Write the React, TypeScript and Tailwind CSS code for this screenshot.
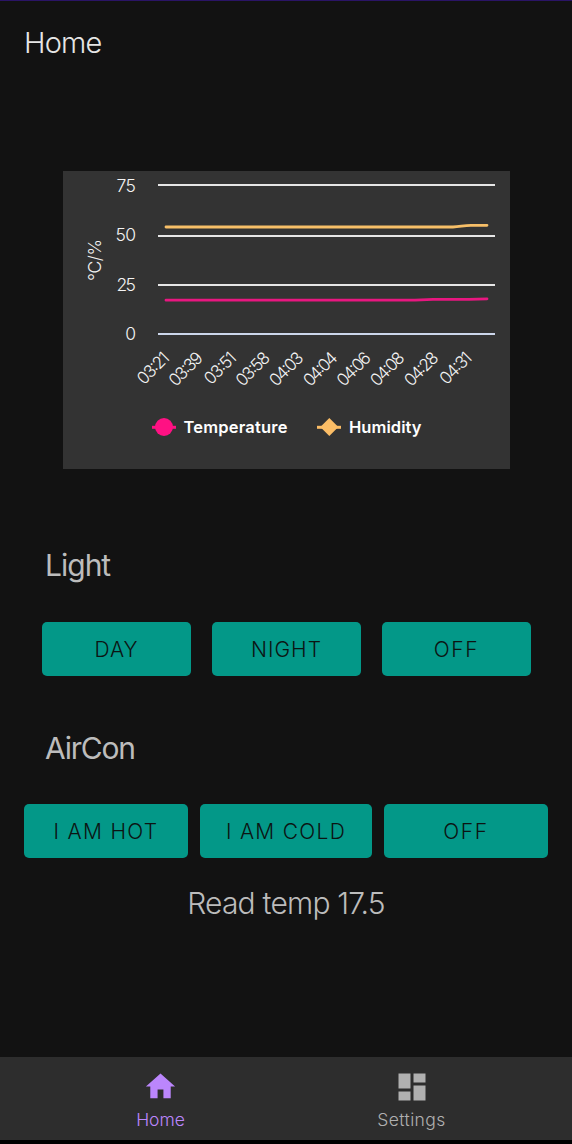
import type { ReactNode } from 'react';

const ticks = [
  { value: '75', y: 14, label: 21 },
  { value: '50', y: 65, label: 70 },
  { value: '25', y: 114, label: 119.5 },
  { value: '0', y: 163, label: 169 },
];

const times = ['03:21', '03:39', '03:51', '03:58', '04:03', '04:04', '04:06', '04:08', '04:28', '04:31'];
const timeEnds = [107.5, 141, 174.5, 208, 241.5, 275.5, 309, 342.5, 376.5, 410];

function Chart() {
  return (
    <svg viewBox="0 0 447 298" className="block h-[298px] w-[447px] bg-[#333333] font-[Inter,sans-serif]">
      {ticks.map((t) => (
        <g key={t.value}>
          <line x1="95" x2="432" y1={t.y} y2={t.y} stroke={t.value === '0' ? '#ccd6eb' : '#e6e6e6'} strokeWidth="1.8" />
          <text x="73" y={t.label} textAnchor="end" fill="#f4f4f4" fontSize="17.5" fontWeight="300"
            textLength={t.value === '0' ? 11 : t.value === '50' ? 20.5 : 19.5}>
            {t.value}
          </text>
        </g>
      ))}
      <text transform="translate(38 110) rotate(-90)" fill="#f4f4f4" fontSize="17.5" fontWeight="300" textLength="42">°C/%</text>
      <path d="M103 56H390C397 56 400 54.3 408 54.3H424" fill="none" stroke="#f7bf68" strokeWidth="2.8" strokeLinecap="round" />
      <path d="M103 129.2H352L370 128.4H406L424 127.8" fill="none" stroke="#e81780" strokeWidth="2.8" strokeLinecap="round" />
      {times.map((t, i) => (
        <text key={t} transform={`translate(${timeEnds[i]} 188) rotate(-45)`} textAnchor="end" fill="#f4f4f4" fontSize="17" fontWeight="300" textLength={t.endsWith('1') ? 37.5 : 40}>
          {t}
        </text>
      ))}
      <line x1="89" x2="113" y1="256.3" y2="256.3" stroke="#ff1183" strokeWidth="3" />
      <circle cx="101" cy="256" r="9" fill="#ff1183" />
      <text x="120.5" y="262" fill="#fff" fontSize="16.5" fontWeight="600" textLength="104">Temperature</text>
      <line x1="254" x2="278" y1="256.3" y2="256.3" stroke="#fbbd66" strokeWidth="3" />
      <path d="M266.3 247L275.3 256L266.3 265L257.3 256Z" fill="#fbbd66" />
      <text x="286" y="262" fill="#fff" fontSize="16.5" fontWeight="600" textLength="72.5">Humidity</text>
    </svg>
  );
}

function Action({ className, children }: { className: string; children: ReactNode }) {
  return (
    <button className={`h-[54px] rounded-[5px] bg-[#039888] text-[21px] leading-none font-light text-[#0c1413] ${className}`}>
      {children}
    </button>
  );
}

export default function App() {
  return (
    <div className="flex h-[1144px] w-[572px] flex-col border-t border-[#2a1466] bg-[#121212] font-[Inter,sans-serif] text-[#bcbcbc]">
      <header className="flex h-[84px] shrink-0 items-center pl-6 text-[29px] font-light tracking-[-0.8px] text-[#e6e6e6]">
        <h1>Home</h1>
      </header>
      <main className="flex flex-1 flex-col">
        <section className="mt-[86px] ml-[63px]">
          <Chart />
        </section>
        <h2 className="mt-[76px] ml-[45px] h-10 text-[30px] leading-10 font-normal tracking-[-1px]">Light</h2>
        <div className="mt-[37px] ml-[42px] flex gap-[21px]">
          <Action className="w-[149px] tracking-[1px]">DAY</Action>
          <Action className="w-[149px] tracking-[1px]">NIGHT</Action>
          <Action className="w-[149px] tracking-[1.6px]">OFF</Action>
        </div>
        <h2 className="mt-[52px] ml-[45px] h-10 text-[30px] leading-10 font-normal tracking-[-1.2px]">AirCon</h2>
        <div className="mt-9 flex gap-3 px-6">
          <Action className="w-[164px] tracking-[1.3px]">I AM HOT</Action>
          <Action className="w-[172px] tracking-[1.3px]">I AM COLD</Action>
          <Action className="w-[164px] tracking-[1.6px]">OFF</Action>
        </div>
        <p className="mt-[25px] text-center text-[30px] leading-10 font-light tracking-[-0.8px]">Read temp 17.5</p>
      </main>
      <nav className="flex h-[87px] shrink-0 border-b-4 border-black bg-[#2d2d2d] px-[35px]">
        <a className="flex flex-1 flex-col items-center pt-[12px] text-[#bb86fc]">
          <svg viewBox="0 0 24 24" className="h-[35px] w-[35px]" fill="currentColor">
            <path d="M10 20v-6h4v6h5v-8h3L12 3 2 12h3v8z" />
          </svg>
          <span className="mt-[4px] text-[17.5px] leading-6 font-light">Home</span>
        </a>
        <a className="flex flex-1 flex-col items-center pt-[12px] text-[#b0b0b0]">
          <svg viewBox="0 0 24 24" className="h-[36px] w-[36px]" fill="currentColor">
            <path d="M3 13h8V3H3v10zm0 8h8v-6H3v6zm10 0h8V11h-8v10zm0-18v6h8V3h-8z" />
          </svg>
          <span className="mt-[3px] text-[17.5px] leading-6 font-light tracking-[0.4px]">Settings</span>
        </a>
      </nav>
    </div>
  );
}
